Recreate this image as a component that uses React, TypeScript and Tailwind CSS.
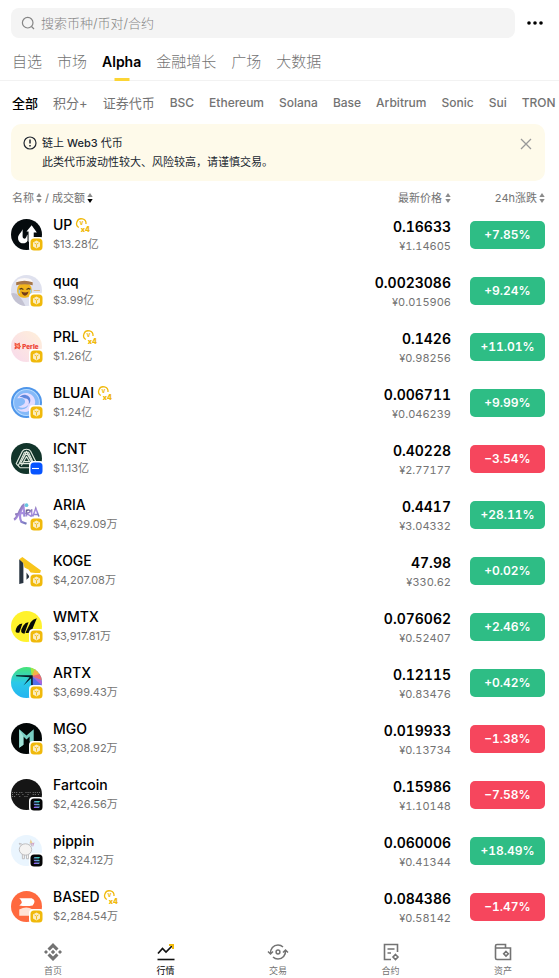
import type { ReactNode } from "react";

type Chain = "bnb" | "base" | "sol";

interface Token {
  name: string;
  volume: string;
  price: string;
  fiat: string;
  change: string;
  chain: Chain;
  boosted?: boolean;
  logo: ReactNode;
}

const tokens: Token[] = [
  {
    name: "UP", volume: "$13.28亿", price: "0.16633", fiat: "¥1.14605", change: "+7.85%", chain: "bnb", boosted: true,
    logo: (
      <>
        <rect width="30" height="30" fill="#050b0e" />
        <path d="M11 10C10 14 6 15 7 20c1 4 7 5 9 1v-6c-1 1-1 4-3 4-3 0-1-5-2-9Z" fill="#fff" />
        <path d="m20 6 5 7h-3v9h-5V12h-2l5-6Z" fill="#fff" />
      </>
    ),
  },
  {
    name: "quq", volume: "$3.99亿", price: "0.0023086", fiat: "¥0.015906", change: "+9.24%", chain: "bnb",
    logo: (
      <>
        <rect width="30" height="30" fill="#dfe1ee" />
        <path d="M0 18q7-3 14 12H0Z" fill="#c3c2d2" />
        <path d="M5 9q-1-6 8-6 9 0 8 6Z" fill="#fbf8f8" />
        <rect x="6" y="8" width="14" height="14" rx="6" fill="#f1b41b" />
        <path d="M5 7q8-3 16 0v3q-8-2-16 0Z" fill="#a6774a" />
        <path d="m8 14 2-1 2 1m3 0 2-1 2 1" fill="none" stroke="#4d3719" strokeWidth="1.2" />
        <path d="M10 16q4 2 7 0-1 4-3.500 4T10 16Z" fill="#733b19" />
        <path d="M8 14v4m11-4v4" stroke="#8ecced" strokeWidth="1.300" />
        <path d="M22 15h6" stroke="#e4b879" />
      </>
    ),
  },
  {
    name: "PRL", volume: "$1.26亿", price: "0.1426", fiat: "¥0.98256", change: "+11.01%", chain: "bnb", boosted: true,
    logo: (
      <>
        <defs>
          <linearGradient id="prl" x1="1" y1="0" x2="0" y2="1">
            <stop stopColor="#fff0d9" />
            <stop offset="1" stopColor="#f8d9ec" />
          </linearGradient>
        </defs>
        <rect width="30" height="30" fill="url(#prl)" />
        <path d="m4 12 2 1 2-1v2l1 1-1 1v1l-2-1-2 1v-1l1-1-1-1Z" fill="#f99a80" stroke="#f04c35" />
        <text x="11" y="17" textAnchor="start" fontSize="6" fontWeight="900" fill="#ee4939">Perle</text>
      </>
    ),
  },
  {
    name: "BLUAI", volume: "$1.24亿", price: "0.006711", fiat: "¥0.046239", change: "+9.99%", chain: "bnb", boosted: true,
    logo: (
      <>
        <rect width="30" height="30" fill="#4f96ea" />
        <circle cx="15" cy="15" r="12.500" fill="#85b9f8" stroke="#b5dbff" />
        <path d="M6 11c4-7 14-7 17 1 2 6-4 13-11 12-3 0-5-2-6-3 5 2 10 0 11-4-2 3-6 4-10 2 5-1 8-4 6-7-2-2-5-1-7-1Z" fill="#e3dcff" />
        <path d="M13 11c4 0 5 3 4 6 3-3 2-8-2-9-3-1-5 0-7 2 2-1 4 0 5 1Z" fill="#5f86dc" />
      </>
    ),
  },
  {
    name: "ICNT", volume: "$1.13亿", price: "0.40228", fiat: "¥2.77177", change: "−3.54%", chain: "base",
    logo: (
      <>
        <rect width="30" height="30" fill="#12352b" />
        <g fill="none" stroke="#e0e8dd" strokeWidth="1.1" strokeLinejoin="round">
          <path d="m5 20 6-12q1-2 4-2t4 2l6 12-2 4H9Z" />
          <path d="m9 20 5-9h2l5 9H9l6-12 7 13" />
          <path d="m7 22 6-13h4l6 13M12 18h6l-3-5-5 9" />
        </g>
      </>
    ),
  },
  {
    name: "ARIA", volume: "$4,629.09万", price: "0.4417", fiat: "¥3.04332", change: "+28.11%", chain: "bnb",
    logo: (
      <>
        <defs>
          <linearGradient id="aria" x2="1" y2="1">
            <stop stopColor="#53516f" />
            <stop offset=".5" stopColor="#ad91e5" />
            <stop offset="1" stopColor="#7176b9" />
          </linearGradient>
        </defs>
        <path d="M3 20C8 17 8 9 12 6l1 11M4 15q5-1 10-2M11 7Q7 17 10 22l5 2" fill="none" stroke="url(#aria)" strokeWidth="2.2" />
        <path d="M15 17v-6q5-1 3 2l-3 1 5 3m0-7v7m1 0 3-8 3 8m-5-2h4" fill="none" stroke="url(#aria)" strokeWidth="1.5" />
        <circle cx="15" cy="6" r="1.8" fill="#69c6df" />
      </>
    ),
  },
  {
    name: "KOGE", volume: "$4,207.08万", price: "47.98", fiat: "¥330.62", change: "+0.02%", chain: "bnb",
    logo: (
      <>
        <path d="m8 4 4 3v20l-4 1Z" fill="#283440" />
        <path d="m8 4 3-2 18 13-1 3-9-1-2-3-4-2-1-4Z" fill="#f8c51b" />
        <path d="m15 17 3 4-3 3Z" fill="#283440" />
      </>
    ),
  },
  {
    name: "WMTX", volume: "$3,917.81万", price: "0.076062", fiat: "¥0.52407", change: "+2.46%", chain: "bnb",
    logo: (
      <>
        <rect width="30" height="30" fill="#fff22d" />
        <path d="M6 15q2-3 5-3l-3 9q-5 1-3-4Zm6-1q2-3 5-3l-4 11q-4 0-3-4Zm7-3q2-3 6-4l-5 12q-2 3-6 2Z" fill="#080b07" />
      </>
    ),
  },
  {
    name: "ARTX", volume: "$3,699.43万", price: "0.12115", fiat: "¥0.83476", change: "+0.42%", chain: "bnb",
    logo: (
      <>
        <defs>
          <linearGradient id="artx" x2="0" y2="1">
            <stop stopColor="#46e477" />
            <stop offset=".5" stopColor="#2ac9e8" />
            <stop offset="1" stopColor="#24b4f1" />
          </linearGradient>
        </defs>
        <rect width="30" height="30" fill="url(#artx)" />
        <path d="M20 9 19 0h6l-5 9Z" fill="#a5e743" />
        <path d="m20 9 4-9 6 7-10 2Z" fill="#f4b148" />
        <path d="M20 9 30 6v7L20 9Z" fill="#ef6772" />
        <path d="m20 9 10 4v6L20 9Z" fill="#ac65db" />
        <path d="m20 9 10 9v12H20Z" fill="#546fed" />
        <path d="M5 8h16v10h-1.500v-7L12 18l6-8-13-1Z" fill="#071a25" />
      </>
    ),
  },
  {
    name: "MGO", volume: "$3,208.92万", price: "0.019933", fiat: "¥0.13734", change: "−1.38%", chain: "bnb",
    logo: (
      <>
        <rect width="30" height="30" fill="#020606" />
        <path d="m8 6 7 6 7-6v15l-4-3v-5l-3 3-3-3v8l-4 3Z" fill="#77cec3" />
        <path d="m8 6 4 7v8l-4 3Z" fill="#a1e2d7" />
      </>
    ),
  },
  {
    name: "Fartcoin", volume: "$2,426.56万", price: "0.15986", fiat: "¥1.10148", change: "−7.58%", chain: "sol",
    logo: (
      <>
        <rect width="30" height="30" fill="#151515" />
        <path d="M1 13h5m2 0h4m2 0h5m2 0h8M1 15h2m2 0h3m3 0h2m3 0h2m3 0h3m2 0h2M1 17h4m3 0h2m3 0h4" stroke="#777" strokeDasharray="1 1" />
      </>
    ),
  },
  {
    name: "pippin", volume: "$2,324.12万", price: "0.060006", fiat: "¥0.41344", change: "+18.49%", chain: "sol",
    logo: (
      <>
        <rect width="30" height="30" fill="#eaf5fe" />
        <g fill="#f4f3f2" stroke="#bab9bb" strokeWidth=".9">
          <path d="M11 18v5h2v-4m2 0v4h2v-5" />
          <ellipse cx="14" cy="14" rx="6" ry="5.5" />
          <path d="m9 10-1-2 3 1m7 0 2-1v3" />
        </g>
        <path d="m18 8 1-4 2 4" fill="#e8ce98" />
        <path d="m19 9 3-1-1 3" stroke="#d0a5c7" fill="none" />
      </>
    ),
  },
  {
    name: "BASED", volume: "$2,284.54万", price: "0.084386", fiat: "¥0.58142", change: "−1.47%", chain: "bnb", boosted: true,
    logo: (
      <>
        <rect width="30" height="30" fill="#ff693e" />
        <path d="M8 7h12q5 2 1 7-6 1-13 0 5-3 0-7Z" fill="#fff" />
        <path d="M8 18q7-4 13 0 4 4-1 6H8Z" fill="#ffe3d6" />
      </>
    ),
  },
];

const mainTabs = ["自选", "市场", "Alpha", "金融增长", "广场", "大数据"];
const filters = ["全部", "积分+", "证券代币", "BSC", "Ethereum", "Solana", "Base", "Arbitrum", "Sonic", "Sui", "TRON"];

function filterStyle(index: number) {
  if (index === 0) return "text-[13px] font-medium text-black";
  if (index < 3) return "text-[13px] font-normal text-[#737373]";
  return "text-xs font-medium text-[#737373]";
}

function ChainBadge({ chain }: { chain: Chain }) {
  return (
    <svg viewBox="0 0 15 15" className="absolute -right-[2px] -bottom-[2px] size-[15px]" aria-hidden="true">
      <rect width="15" height="15" rx="4" fill="#fff" />
      {chain === "bnb" && (
        <>
          <rect x="1.500" y="1.500" width="12" height="12" rx="3.500" fill="#f0b90b" />
          <path d="m7.500 3.500 3.500 2v4l-3.500 2-3.500-2v-4Z" fill="#fff" fillOpacity=".75" />
          <path d="m5.500 6 2 1.200 2-1.200M7.500 7.500v3" fill="none" stroke="#f0b90b" strokeWidth=".9" />
        </>
      )}
      {chain === "base" && (
        <>
          <rect x="1.500" y="1.500" width="12" height="12" rx="3.500" fill="#0754ff" />
          <path d="M3 7.500h7" stroke="#fff" strokeWidth="1.100" />
        </>
      )}
      {chain === "sol" && (
        <>
          <defs>
            <linearGradient id="sol" x1="0" y1="1" x2="1" y2="0">
              <stop stopColor="#a74bff" />
              <stop offset="1" stopColor="#2be8ad" />
            </linearGradient>
          </defs>
          <rect x="1.500" y="1.500" width="12" height="12" rx="3.500" fill="#050506" />
          <path d="M5.500 4H11l-1 1.500H4.500Zm-1 2.700H10l1 1.500H5.500Zm1 2.700H11L10 11H4.500Z" fill="url(#sol)" />
        </>
      )}
    </svg>
  );
}

function Boost() {
  return (
    <svg viewBox="0 0 14 14" className="size-[14px] shrink-0 overflow-visible" role="img" aria-label="积分 x4">
      <path d="M2.800 9.500A4.700 4.700 0 1 1 10 6" fill="none" stroke="#f0b90b" strokeWidth="1.300" />
      <text x="5.400" y="6.500" textAnchor="middle" fontSize="5" fontWeight="800" fill="#f0b90b">V</text>
      <text x="14" y="14" textAnchor="end" fontSize="7" fontWeight="900" fill="#f0b90b">x4</text>
    </svg>
  );
}

function SortIcon({ active = false }: { active?: boolean }) {
  return (
    <svg viewBox="0 0 6 10" className="h-[10px] w-[6px] shrink-0" aria-hidden="true">
      <path d="m3 0 2.700 4H.3Z" fill="#8b8b8b" />
      <path d="m3 10 2.700-4H.3Z" fill={active ? "#000" : "#8b8b8b"} />
    </svg>
  );
}

const navItems: { label: string; icon: ReactNode }[] = [
  {
    label: "首页",
    icon: (
      <g fill="#737373">
        <path d="m9 0 5.500 5.500-2.200 2.200L9 4.400 5.700 7.700 3.500 5.500Z" />
        <path d="m9 18 5.500-5.500-2.200-2.200L9 13.600l-3.300-3.300-2.200 2.200Z" />
        <path d="m9 6.800 2.200 2.200L9 11.200 6.800 9ZM2 7l2 2-2 2-2-2Zm14 0 2 2-2 2-2-2Z" />
      </g>
    ),
  },
  {
    label: "行情",
    icon: (
      <>
        <path d="m1 10.500 4.500-5 3.500 3.500 6.500-6.500" fill="none" stroke="#111" strokeWidth="1.700" />
        <path d="M12 1h5v5h-2V3h-3Z" fill="#f0b90b" />
        <path d="M.5 16.500h17" stroke="#111" strokeWidth="1.600" />
      </>
    ),
  },
  {
    label: "交易",
    icon: (
      <g fill="none" stroke="#737373" strokeWidth="1.500">
        <path d="M1.500 11C1 5.500 4.500 2 9 2q3 0 5 2M-1 8.500l2.500 2.500L4 8.500M16.500 7c.5 5.500-3 9-7.500 9q-3 0-5-2M14 9.500 16.500 7 19 9.500" />
        <circle cx="9" cy="9" r="1.900" />
      </g>
    ),
  },
  {
    label: "合约",
    icon: (
      <g fill="none" stroke="#737373" strokeWidth="1.600">
        <path d="M9 16.500H2.500v-15h13V9M5.500 6h7m-7 4H9" />
        <path d="m13.500 11.500 2.500 2.500-2.500 2.500L11 14Z" />
      </g>
    ),
  },
  {
    label: "资产",
    icon: (
      <g fill="none" stroke="#737373" strokeWidth="1.600">
        <path d="M1.500 5v10q0 1.500 1.500 1.500h13.500V5H1.500V3Q1.500 1.500 3 1.500h8.500V5" />
        <path d="m12 8.500 2.300 2.300L12 13.100l-2.300-2.300Z" />
      </g>
    ),
  },
];

export default function App() {
  return (
    <div className="w-full overflow-hidden bg-white font-[Inter,'Noto_Sans_CJK_SC',sans-serif] text-black">
      <header>
        <div className="flex items-center pt-2 pr-4 pl-[11px]">
          <label className="flex h-[30px] flex-1 items-center gap-[6px] rounded-lg bg-[#f4f4f4] px-[10px]">
            <svg viewBox="0 0 14 14" className="size-[14px] shrink-0" fill="none" stroke="#858585" strokeWidth="1.200" aria-hidden="true">
              <circle cx="6.700" cy="6.700" r="5.300" />
              <path d="m10.500 10.500 2.500 2.500" />
            </svg>
            <input type="search" aria-label="搜索" placeholder="搜索币种/币对/合约" className="min-w-0 flex-1 bg-transparent text-[13px] leading-5 font-light outline-none placeholder:text-[#858585]" />
          </label>
          <button type="button" aria-label="更多" className="ml-3">
            <svg viewBox="0 0 16 16" className="size-4">
              <circle cx="2" cy="8" r="1.800" />
              <circle cx="8" cy="8" r="1.800" />
              <circle cx="14" cy="8" r="1.800" />
            </svg>
          </button>
        </div>
        <nav className="mt-[6px] flex h-[37px] gap-[15px] border-b border-[#f2f2f2] px-3">
          {mainTabs.map((tab) => {
            const active = tab === "Alpha";
            return (
              <button key={tab} type="button" className={`relative h-9 shrink-0 ${active ? "text-sm font-semibold text-black" : "text-[15px] font-light text-[#737373]"}`}>
                {tab}
                {active && <span className="absolute -bottom-px left-1/2 h-[3px] w-[15px] -translate-x-1/2 bg-[#fcd535]" />}
              </button>
            );
          })}
        </nav>
        <div className="flex h-[43px] items-center gap-[15px] overflow-hidden pl-3">
          {filters.map((filter, index) => (
            <button key={filter} type="button" className={`shrink-0 leading-5 ${filterStyle(index)}`}>
              {filter}
            </button>
          ))}
        </div>
      </header>

      <main>
        <section className="mr-[14px] ml-[11px] flex items-start gap-[5px] rounded-[10px] bg-[#fefaea] px-3 pt-[10px] pb-[9px] text-[#202630]">
          <svg viewBox="0 0 14 14" className="mt-[2px] size-[14px] shrink-0" fill="none" stroke="#202630" strokeWidth="1.200" aria-hidden="true">
            <circle cx="7" cy="7" r="6" />
            <path d="M7 3.500v4m0 1.500v1.500" strokeWidth="1.500" />
          </svg>
          <div className="flex-1 text-[11px] leading-[19px]">
            <h2 className="font-normal">链上 <span className="font-medium">Web3</span> 代币</h2>
            <p>此类代币波动性较大、风险较高，请谨慎交易。</p>
          </div>
          <button type="button" aria-label="关闭" className="mt-1">
            <svg viewBox="0 0 14 12" className="h-3 w-[14px]" fill="none" stroke="#999" strokeWidth="1.300">
              <path d="m2 1 10 10m0-10L2 11" />
            </svg>
          </button>
        </section>

        <table className="mt-2 w-full table-fixed border-collapse">
          <thead>
            <tr className="h-[18px] text-[11px] leading-[18px] text-[#737373]">
              <th scope="col" className="p-0 pl-3 text-left font-normal">
                <div className="flex items-center gap-[3px]">
                  <button type="button" className="flex items-center gap-[2px]">名称<SortIcon /></button>
                  <span>/</span>
                  <button type="button" className="flex items-center gap-[2px]">成交额<SortIcon active /></button>
                </div>
              </th>
              <th scope="col" className="w-[150px] p-0 font-normal">
                <button type="button" className="ml-auto flex items-center gap-[3px]">最新价格<SortIcon /></button>
              </th>
              <th scope="col" className="w-[108px] p-0 pr-[14px] font-normal">
                <button type="button" className="ml-auto flex items-center gap-[2px]">24h涨跌<SortIcon /></button>
              </th>
            </tr>
          </thead>
          <tbody>
            {tokens.map((token) => (
              <tr key={token.name} className="h-14">
                <td className="p-0 pb-[2px] pl-[11px]">
                  <div className="flex items-center gap-[11px]">
                    <div className="relative size-[31px] shrink-0">
                      <svg viewBox="0 0 30 30" className="size-full rounded-full" aria-hidden="true">{token.logo}</svg>
                      <ChainBadge chain={token.chain} />
                    </div>
                    <div>
                      <div className="flex items-center gap-1 text-sm leading-5 font-medium">
                        {token.name}
                        {token.boosted && <Boost />}
                      </div>
                      <div className="text-[11px] leading-[18px] text-[#737373]">{token.volume}</div>
                    </div>
                  </div>
                </td>
                <td className="p-0 pt-[2px] text-right tabular-nums">
                  <div className="text-sm leading-5 font-semibold">{token.price}</div>
                  <div className="text-[11px] leading-[18px] text-[#737373]">{token.fiat}</div>
                </td>
                <td className="p-0 pr-[14px]">
                  <div className={`ml-auto w-[75px] rounded-[5px] text-center text-[12px] leading-7 font-semibold text-white tabular-nums ${token.change.startsWith("+") ? "bg-[#2ebd85]" : "bg-[#f6465d]"}`}>
                    {token.change}
                  </div>
                </td>
              </tr>
            ))}
          </tbody>
        </table>
      </main>

      <nav className="flex h-[43px] justify-between bg-white pt-2 pr-[47px] pl-11">
        {navItems.map((item) => (
          <button key={item.label} type="button" className={`flex w-[18px] flex-col items-center gap-[2px] text-[9px] leading-4 whitespace-nowrap ${item.label === "行情" ? "text-black" : "text-[#737373]"}`}>
            <svg viewBox="0 0 18 18" className="size-[18px] shrink-0 overflow-visible" aria-hidden="true">{item.icon}</svg>
            {item.label}
          </button>
        ))}
      </nav>
    </div>
  );
}
